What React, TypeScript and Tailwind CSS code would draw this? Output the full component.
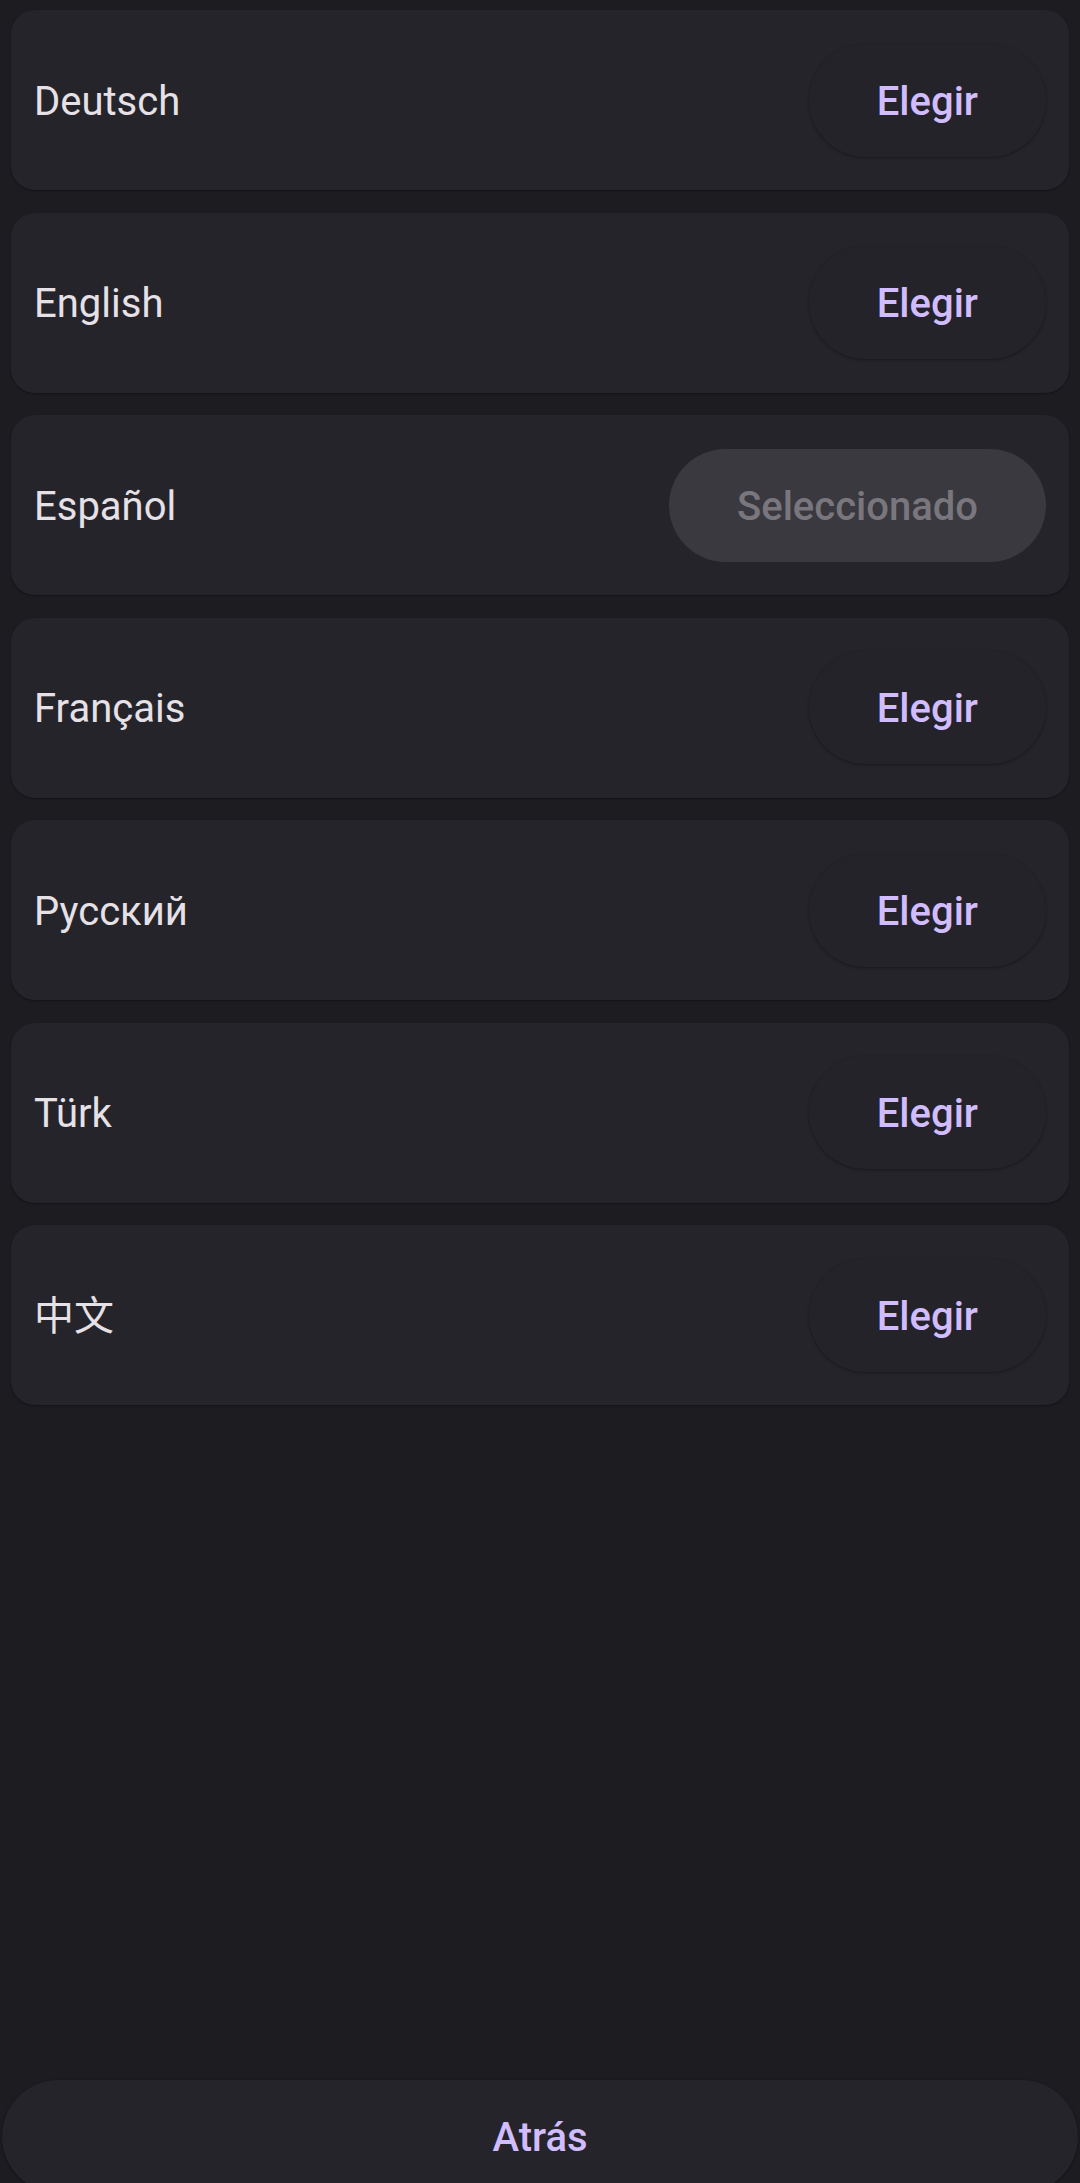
import React, { useState } from 'react';

const languages = ['Deutsch', 'English', 'Español', 'Français', 'Русский', 'Türk', '中文'];

const LanguageRow: React.FC<{ name: string; selected: boolean; onPick: () => void }> = ({
  name,
  selected,
  onPick,
}) => (
  <div className="flex h-[180px] items-center justify-between rounded-[24px] bg-[#25242a] pl-[23px] pr-[23px] shadow-[0_1px_2px_rgba(0,0,0,0.35)]">
    <span className="pt-[3px] text-[40px] text-[#e6e1e6]">{name}</span>
    {selected ? (
      <button className="flex h-[113px] items-center rounded-full bg-[#3a393f] px-[68px] pt-[3px] text-[40px] font-medium text-[#79777d]">
        Seleccionado
      </button>
    ) : (
      <button
        onClick={onPick}
        className="flex h-[113px] items-center rounded-full bg-[#242329] px-[68px] pt-[3px] text-[40px] font-medium text-[#d0bcff] shadow-[0_1px_3px_rgba(0,0,0,0.35)]"
      >
        Elegir
      </button>
    )}
  </div>
);

export default function App() {
  const [current, setCurrent] = useState('Español');

  return (
    <div
      className="flex h-[2183px] flex-col overflow-hidden bg-[#1d1c21]"
      style={{ fontFamily: 'Roboto, "Noto Sans CJK SC", sans-serif' }}
    >
      <div className="flex flex-col gap-[22.5px] px-[11px] pt-[10px]">
        {languages.map((lang) => (
          <LanguageRow
            key={lang}
            name={lang}
            selected={lang === current}
            onPick={() => setCurrent(lang)}
          />
        ))}
      </div>
      <div className="mt-auto mb-[-10px] px-[2px]">
        <button className="flex h-[113px] w-full items-center justify-center rounded-full bg-[#25242a] pt-[3px] text-[40px] font-medium text-[#d0bcff] shadow-[0_1px_3px_rgba(0,0,0,0.35)]">
          Atrás
        </button>
      </div>
    </div>
  );
}
